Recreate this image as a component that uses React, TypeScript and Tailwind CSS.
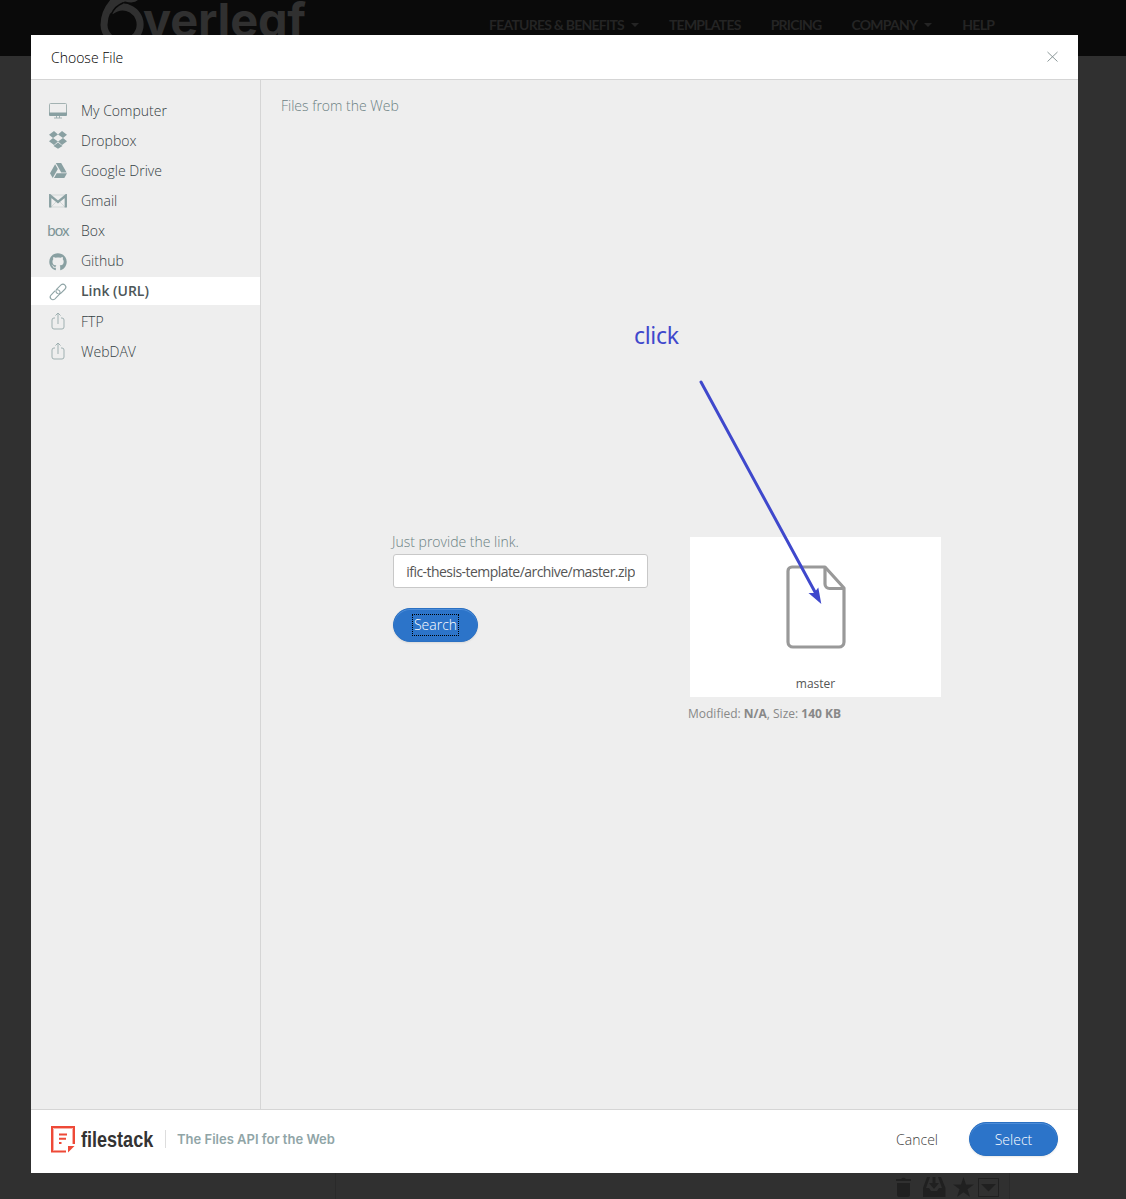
import React from "react";
import { FaGithub, FaGoogleDrive } from "react-icons/fa";

const Computer = () => (
  <svg width="20" height="18" viewBox="0 0 20 18">
    <rect x="1.5" y="2.5" width="17" height="11" rx="1" fill="none" stroke="#a3b2b2" />
    <path d="M1 11.500h18v2.600a1 1 0 0 1-1 1H2a1 1 0 0 1-1-1z" fill="#89a0a2" />
    <path d="M6 17h8M8.500 15v2M11.500 15v2" stroke="#9fb0b1" fill="none" />
  </svg>
);

const Dropbox = () => (
  <svg width="20" height="18" viewBox="0 0 20 18" fill="#89a0a2">
    <path d="M6 0L10 3.500L5 7L1 3.700zM14 0L19 3.700L15 7L10 3.500zM5 7L10 10.500L6 14L1 10.300zM15 7L19 10.300L14 14L10 10.500zM10 11.500L14.500 15L10 17.800L5.500 15z" />
  </svg>
);

const Gmail = () => (
  <svg width="18" height="14" viewBox="0 0 18 14" className="relative top-px">
    <path d="M1 13V1h16v12z" fill="none" stroke="#c5cfcf" strokeWidth=".7" />
    <path d="M2 13l5-5M16 13l-5-5" stroke="#c5cfcf" strokeWidth=".7" />
    <path d="M1.200 13.500V1.500L9 8l7.800-6.500v12" fill="none" stroke="#89a0a2" strokeWidth="2.300" />
  </svg>
);

const Chain = () => (
  <svg width="20" height="20" viewBox="0 0 20 20" fill="none" stroke="#8ea3a5" strokeWidth="1.100" strokeLinecap="round" className="relative top-px">
    <path d="M9.500 11.500C7.500 10.600 7.600 8.300 8.800 7.100L13 2.900C15.700.6 19.500 4.300 17.100 7L13 11.200c-.7.6-1.300.8-2.300.7" />
    <path d="M9.300 7.700C10 7.600 11 8 11.700 9c.8 1.200.5 2.400-.4 3.400L7 16.800C4.100 19.300.6 15.700 3 13l3.700-3.800" />
  </svg>
);

const Share = () => (
  <svg width="14" height="20" viewBox="0 0 14 20" fill="none" stroke="#9fb0b1" strokeWidth="1">
    <path d="M4 7H3a2 2 0 0 0-2 2v7a2 2 0 0 0 2 2h8a2 2 0 0 0 2-2V9a2 2 0 0 0-2-2H10M7 13V2M4.500 4.500L7 2l2.500 2.500" />
  </svg>
);

const BoxMark = () => (
  <span className="font-['Lato'] text-[15px] font-normal tracking-[-0.900px] leading-none text-[#7d9597]">box</span>
);

const sources = [
  { label: "My Computer", icon: <Computer />, cls: "" },
  { label: "Dropbox", icon: <Dropbox />, cls: "" },
  { label: "Google Drive", icon: <FaGoogleDrive size={17} />, cls: "" },
  { label: "Gmail", icon: <Gmail />, cls: "" },
  { label: "Box", icon: <BoxMark />, cls: "" },
  { label: "Github", icon: <FaGithub size={18} className="relative top-px" />, cls: "" },
  { label: "Link (URL)", icon: <Chain />, active: true, cls: "" },
  { label: "FTP", icon: <Share />, cls: "" },
  { label: "WebDAV", icon: <Share />, cls: "" },
];

const Caret = () => <span className="ml-[7px] mb-[1px] inline-block border-x-4 border-t-4 border-x-transparent border-t-[#242424] align-middle" />;

function TopBar() {
  return (
    <div className="h-14 bg-[#0a0a0a] flex">
      <div className="ml-[100px] w-[389px] flex text-[#303030]">
        <svg width="44" height="44" viewBox="0 0 44 44" className="shrink-0">
          <path d="M10.500 11.500Q21 3.500 31.500 9.500A17.500 17.500 0 0 1 21 42A17.500 17.500 0 0 1 4 25Q4 10 17-2" fill="none" stroke="#303030" strokeWidth="7" />
          <path d="M12 0H38Q34 4 25 1.500Q16 4 10 14L5 12z" fill="#303030" />
          <path d="M11.500 14Q15 6 23 3" fill="none" stroke="#0a0a0a" strokeWidth="1.500" />
        </svg>
        <span className="font-['Inter'] font-bold text-[47px] leading-[56px] tracking-[-0.200px] -mt-[8px] ml-[-1px] [font-feature-settings:'cv11']">verleaf</span>
      </div>
      <nav className="flex h-12 items-center gap-[30px] whitespace-nowrap font-['Lato'] text-[14px] font-bold tracking-[-0.760px] text-[#242424]">
        <span>FEATURES &amp; BENEFITS<Caret /></span>
        <span>TEMPLATES</span>
        <span>PRICING</span>
        <span>COMPANY<Caret /></span>
        <span>HELP</span>
      </nav>
    </div>
  );
}

function Sidebar() {
  return (
    <aside className="flex w-[230px] shrink-0 flex-col gap-[2.170px] border-r border-[#d5d5d5] pt-4">
      {sources.map((s) => (
        <div
          key={s.label}
          className={
            "flex h-7 shrink-0 items-center text-[14px] " +
            (s.active ? "bg-white font-semibold text-[#4c5658]" : "font-light text-[#344043]")
          }
        >
          <span className="ml-[17px] flex w-5 justify-center text-[#89a0a2]">{s.icon}</span>
          <span className={"ml-[13px] " + s.cls}>{s.label}</span>
        </div>
      ))}
    </aside>
  );
}

function FilePicker() {
  return (
    <main className="relative flex flex-1 flex-col">
      <h2 className="ml-5 mt-4 h-5 text-[14px] font-light leading-5 text-[#6b8183]">Files from the Web</h2>
      <div className="ml-[131px] mt-[416px] flex">
        <div className="w-[256px] shrink-0">
          <p className="h-[22px] text-[14px] font-light leading-[20px] text-[#6b8183]">Just provide the link.</p>
          <div className="ml-px flex h-[34px] justify-end rounded-[3px] border border-[#c8c8c8] bg-white px-[12px]">
            <div className="flex h-8 w-[229px] items-center justify-end overflow-hidden whitespace-nowrap text-[14px] tracking-[-0.550px] text-[#555]">
              ific-thesis-template/archive/master.zip
            </div>
          </div>
          <button className="ml-px mt-5 flex h-[34px] w-[85px] items-center justify-center rounded-full border border-[#2a70c2] bg-[#2c74c9] text-[14px] font-light text-white shadow-[inset_0_1px_0_#4c8cd8,0_1px_2px_#00000018]">
            <span className="border border-dotted border-black px-px leading-5">Search</span>
          </button>
        </div>
        <div className="ml-[40px] mt-[5px] w-[253px]">
          <div className="ml-[2px] flex h-[160px] w-[251px] flex-col items-center bg-white">
            <svg width="60" height="84" viewBox="0 0 60 84" className="mt-7 ml-px" fill="none" stroke="#999" strokeWidth="3.200" strokeLinejoin="round">
              <path d="M6 2H39L58 23V77a5 5 0 0 1-5 5H7a5 5 0 0 1-5-5V6a4 4 0 0 1 4-4z" />
              <path d="M39 3V19a4.500 4.500 0 0 0 4.500 4.500H57" />
            </svg>
            <span className="mt-[27px] text-[12px] leading-4 text-[#555]">master</span>
          </div>
          <p className="mt-2 whitespace-nowrap text-[12px] leading-[18px] text-[#888]">
            Modified: <b>N/A</b>, Size: <b>140 KB</b>
          </p>
        </div>
      </div>
      <span className="absolute left-[373px] top-[239px] font-['Noto_Sans'] text-[23px] leading-8 tracking-[-0.300px] text-[#3f48cc]">click</span>
      <svg width="130" height="230" viewBox="0 0 130 230" className="absolute left-[434px] top-[297px]">
        <path d="M6 5L120 215" stroke="#3f48cc" strokeWidth="3" strokeLinecap="round" />
        <path d="M126.300 227L113.500 216L119 216L123.300 210.500Z" fill="#3f48cc" />
      </svg>
    </main>
  );
}

function Footer() {
  return (
    <footer className="flex h-16 shrink-0 items-center border-t border-[#d5d5d5] bg-white pb-[5px] pl-5 pr-5">
      <svg width="24" height="27" viewBox="0 0 24 27">
        <path d="M15 25.500H1V1H23V18" fill="none" stroke="#ee4937" strokeWidth="2" />
        <path d="M2.500 24V2.500H21.500V18" fill="none" stroke="#f8b0a7" strokeWidth="1" />
        <path d="M17 20h6.500L17 26.500z" fill="#ee4937" />
        <path d="M8 8.500h8M8 12.800h7M8 17h2.500" stroke="#ee4937" strokeWidth="2" />
      </svg>
      <div className="ml-[6px] w-[73px] pt-[2px]">
        <span className="inline-block origin-left scale-x-[0.820] font-['Liberation_Sans'] text-[22px] font-bold leading-6 text-[#333]">filestack</span>
      </div>
      <div className="ml-[11px] h-[18px] w-px bg-[#ddd]" />
      <span className="ml-[11px] whitespace-nowrap pt-[2px] font-['Inter'] text-[13px] font-semibold text-[#90a5a7]">The Files API for the Web</span>
      <button className="ml-auto mr-[31px] text-[14px] font-light text-[#404040]">Cancel</button>
      <button className="flex h-[34px] w-[89px] items-center justify-center rounded-full border border-[#2a70c2] bg-[#2c74c9] text-[14px] font-light text-white shadow-[inset_0_1px_0_#4c8cd8,0_1px_2px_#00000018]">Select</button>
    </footer>
  );
}

export default function App() {
  return (
    <div className="relative h-[1199px] w-[1126px] overflow-hidden bg-[#303030] font-['Open_Sans',sans-serif]">
      <TopBar />
      <div className="flex h-[1143px] flex-col justify-end">
        <div className="flex h-[26px] items-start">
          <div className="ml-[335px] h-full w-px bg-[#2a2a2a]" />
          <svg width="110" height="22" viewBox="0 0 110 22" className="ml-[557px] mt-[4px]" fill="#202020">
            <path d="M3 2h5q2.500-2.500 5 0h5v2H3zM4 6h13v12q0 2-2 2H6q-2 0-2-2z" />
            <path d="M34 0h3l-4 11h3l2 3h6l2-3h3l-4-11h3l4.500 11v9H30v-9zM39.500 0h3v6h3.500l-5 6-5-6h3.500z" />
            <path d="M70.500 0L73 7.600H81L74.500 12.300L77 20L70.500 15.300L64 20L66.500 12.300L60 7.600H68z" />
            <rect x="85.500" y="1.500" width="20" height="18" fill="none" stroke="#202020" />
            <path d="M88 7h15L95.500 14.500z" />
          </svg>
          <div className="ml-[6px] h-full w-px bg-[#2a2a2a]" />
        </div>
      </div>
      <section className="absolute left-[31px] top-[35px] flex h-[1138px] w-[1047px] flex-col bg-[#eee]">
        <header className="flex h-[45px] shrink-0 items-center justify-between border-b border-[#d5d5d5] bg-white pl-5 pr-5 text-[14px] font-light text-black">
          <span>Choose File</span>
          <svg width="11" height="11" viewBox="0 0 11 11" className="-mt-[2px]" stroke="#7f8c8d" strokeWidth=".9">
            <path d="M.5 1L10.500 10.500M10.500 1L.5 10.500" />
          </svg>
        </header>
        <div className="flex min-h-0 flex-1">
          <Sidebar />
          <FilePicker />
        </div>
        <Footer />
      </section>
    </div>
  );
}
